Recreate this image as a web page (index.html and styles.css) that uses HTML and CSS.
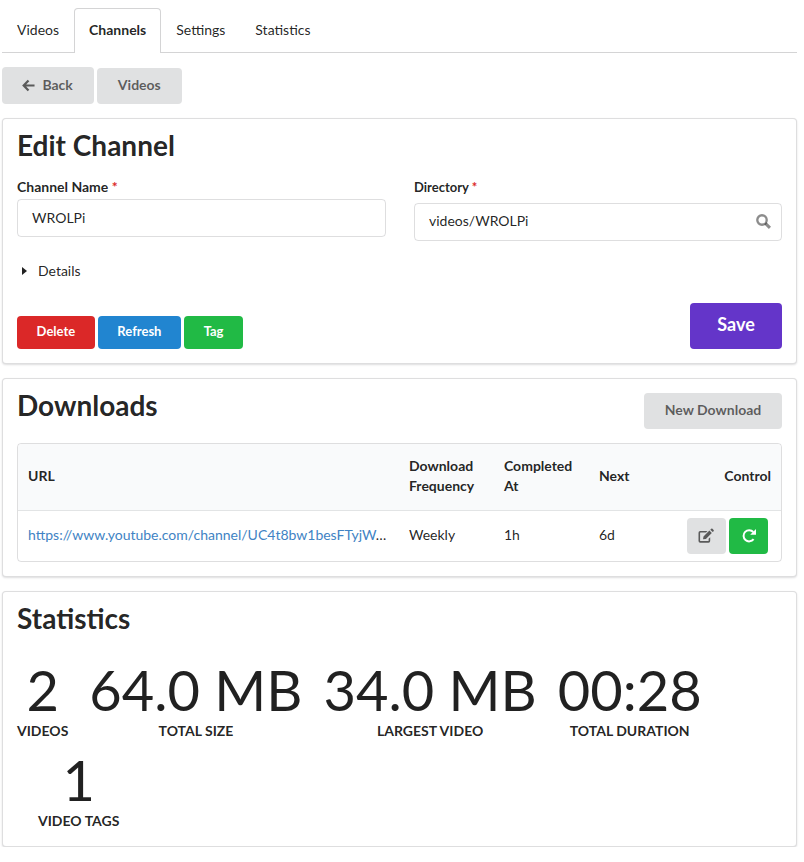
FILE: index.html
```html
<!DOCTYPE html>
<html lang="en">
<head>
    <meta charset="UTF-8">
    <meta name="viewport" content="width=device-width, initial-scale=1.0">
    <title>Edit Channel</title>
    <link rel="stylesheet" href="styles.css">
</head>
<body>
    <div class="tabs">
        <a class="tab">Videos</a>
        <a class="tab active">Channels</a>
        <a class="tab">Settings</a>
        <a class="tab">Statistics</a>
    </div>

    <div class="nav-buttons">
        <button class="btn grey back">
            <svg class="icon-back" viewBox="0 0 14 14"><path d="M7 1.500 1.800 7 7 12.500M2 7h11.500" fill="none" stroke="currentColor" stroke-width="2.400"/></svg>
            Back
        </button>
        <button class="btn grey">Videos</button>
    </div>

    <div class="card edit-card">
        <h1>Edit Channel</h1>
        <div class="fields">
            <div class="field name-field">
                <label>Channel Name <span class="req">*</span></label>
                <div class="input">WROLPi</div>
            </div>
            <div class="field dir-field">
                <label>Directory <span class="req">*</span></label>
                <div class="input">
                    videos/WROLPi
                    <svg class="icon-search" viewBox="0 0 14 14"><circle cx="5.600" cy="5.600" r="4.400" fill="none" stroke="currentColor" stroke-width="2.200"/><path d="M8.800 8.800l4.200 4.200" stroke="currentColor" stroke-width="2.800"/></svg>
                </div>
            </div>
        </div>
        <div class="details"><span class="caret"></span>Details</div>
        <div class="actions">
            <button class="btn red">Delete</button>
            <button class="btn blue">Refresh</button>
            <button class="btn green">Tag</button>
            <button class="btn save">Save</button>
        </div>
    </div>

    <div class="card downloads-card">
        <div class="card-head">
            <h2>Downloads</h2>
            <button class="btn grey new-download">New Download</button>
        </div>
        <div class="table">
            <div class="row head">
                <div class="cell">URL</div>
                <div class="cell">Download Frequency</div>
                <div class="cell">Completed At</div>
                <div class="cell">Next</div>
                <div class="cell right">Control</div>
            </div>
            <div class="row">
                <div class="cell"><a class="url">https://www.youtube.com/channel/UC4t8bw1besFTyjW</a>…</div>
                <div class="cell">Weekly</div>
                <div class="cell">1h</div>
                <div class="cell">6d</div>
                <div class="cell controls">
                    <button class="btn grey icon-btn edit">
                        <svg viewBox="0 0 16 16"><path d="M12.200 9.200V13a1.700 1.700 0 0 1-1.700 1.700H2.200A1.700 1.700 0 0 1 .5 13V4.700A1.700 1.700 0 0 1 2.200 3H9.500L8 4.600H2.400a.3.300 0 0 0-.3.3v7.900a.3.300 0 0 0 .3.300h7.900a.3.300 0 0 0 .3-.3V10.800z" fill="currentColor"/><path d="M5.500 8.500 11.400 2.600l2.400 2.400-5.900 5.900-2.900.4zM12.300 1.700l.9-.9a1 1 0 0 1 1.300 0l1.100 1.100a1 1 0 0 1 0 1.300l-.9.9z" fill="currentColor"/></svg>
                    </button>
                    <button class="btn green icon-btn">
                        <svg viewBox="0 0 16 16"><path d="M12.600 11.200A5.600 5.600 0 1 1 12.300 4" fill="none" stroke="currentColor" stroke-width="2"/><path d="M15 1v5.800H9.200z" fill="currentColor"/></svg>
                    </button>
                </div>
            </div>
        </div>
    </div>

    <div class="card stats-card">
        <h2>Statistics</h2>
        <div class="stats">
            <div class="stat"><div class="value">2</div><div class="label">Videos</div></div>
            <div class="stat"><div class="value">64.0 MB</div><div class="label">Total Size</div></div>
            <div class="stat"><div class="value">34.0 MB</div><div class="label">Largest Video</div></div>
            <div class="stat"><div class="value">00:28</div><div class="label">Total Duration</div></div>
            <div class="stat"><div class="value">1</div><div class="label">Video Tags</div></div>
        </div>
    </div>
</body>
</html>
```

FILE: styles.css
```css
body {
    margin: 0;
    padding: 8px 7px 0 2px;
    font-family: Lato, "Open Sans", sans-serif;
    font-size: 14px;
    line-height: 20px;
    color: rgba(0, 0, 0, 0.87);
    background-color: #fff;
}
h1, h2 {
    margin: 0;
    font-size: 28px;
    line-height: 32px;
    font-weight: 700;
}
button {
    font-family: inherit;
}

.tabs {
    display: flex;
    height: 44px;
    border-bottom: 1px solid #d4d4d5;
    box-sizing: content-box;
}
.tab {
    padding: 12px 15px;
}
.tab.active {
    margin-bottom: -1px;
    padding: 11px 14px 12px;
    font-weight: 700;
    background-color: #fff;
    border: 1px solid #d4d4d5;
    border-bottom: 0;
    border-radius: 4px 4px 0 0;
}

.btn {
    display: inline-block;
    margin: 0;
    border: 0;
    border-radius: 4px;
    font-size: 14px;
    font-weight: 700;
    line-height: 14px;
    color: #fff;
}
.btn.grey {
    color: rgba(0, 0, 0, 0.6);
    background-color: #e0e1e2;
}
.btn.red { background-color: #db2828; }
.btn.blue { background-color: #2185d0; }
.btn.green { background-color: #21ba45; }

.nav-buttons {
    display: flex;
    align-items: flex-end;
    gap: 3px;
    margin-top: 14px;
}
.nav-buttons .btn {
    height: 36px;
    padding: 0 21px 2px;
}
.nav-buttons .back {
    height: 37px;
    padding: 0 21px 1px 20px;
}
.icon-back {
    width: 13px;
    height: 13px;
    margin-right: 4px;
    vertical-align: -2px;
}

.card {
    margin-top: 14px;
    padding: 14px;
    background-color: #fff;
    border: 1px solid rgba(34, 36, 38, 0.15);
    border-radius: 4px;
    box-shadow: 0 1px 2px rgba(34, 36, 38, 0.15);
}

.edit-card {
    height: 246px;
    box-sizing: border-box;
    padding-top: 10px;
}
.fields {
    display: grid;
    grid-template-columns: 369px 368px;
    gap: 28px;
    margin-top: 16px;
}
.field label {
    display: block;
    font-weight: 700;
}
.name-field label {
    margin-bottom: 2px;
}
.dir-field label {
    margin-bottom: 6px;
    font-size: 13px;
}
.req {
    color: #db2828;
}
.input {
    display: flex;
    align-items: center;
    justify-content: space-between;
    height: 38px;
    box-sizing: border-box;
    padding: 0 14px;
    border: 1px solid rgba(34, 36, 38, 0.15);
    border-radius: 4px;
}
.dir-field .input {
    padding-bottom: 2px;
}
.icon-search {
    width: 15px;
    height: 15px;
    margin-right: -4px;
    color: rgba(0, 0, 0, 0.45);
}
.details {
    display: flex;
    align-items: center;
    margin-top: 20px;
}
.caret {
    width: 0;
    height: 0;
    margin: 0 11px 0 5px;
    border-left: 5px solid rgba(0, 0, 0, 0.87);
    border-top: 4px solid transparent;
    border-bottom: 4px solid transparent;
}
.actions {
    display: flex;
    align-items: flex-end;
    gap: 3px;
    margin-top: 22px;
}
.actions .btn {
    height: 33px;
    padding: 0 19.6px 4px;
    font-size: 13px;
}
.actions .save {
    height: 46px;
    width: 92px;
    margin-left: auto;
    padding: 0 0 4px;
    font-size: 18px;
    background-color: #6435c9;
}

.downloads-card {
    height: 199px;
    box-sizing: border-box;
    padding-top: 10px;
}
.card-head {
    display: flex;
    justify-content: space-between;
    align-items: flex-start;
    height: 54px;
}
.new-download {
    height: 36px;
    width: 138px;
    margin-top: 4px;
    padding-bottom: 4px;
}
.table {
    border: 1px solid rgba(34, 36, 38, 0.15);
    border-radius: 4px;
}
.row {
    display: grid;
    grid-template-columns: 381px 95px 95px 62px 1fr;
    align-items: center;
    height: 50px;
}
.row.head {
    height: 66px;
    font-weight: 700;
    background-color: #f9fafb;
    border-bottom: 1px solid rgba(34, 36, 38, 0.1);
    border-radius: 4px 4px 0 0;
}
.cell {
    padding: 0 10px 2px;
    min-width: 0;
}
.cell.right {
    text-align: right;
}
.url {
    color: #4183c4;
}
.controls {
    display: flex;
    justify-content: flex-end;
    gap: 3px;
    padding: 0 13px 0 0;
}
.icon-btn {
    display: flex;
    align-items: center;
    justify-content: center;
    width: 39px;
    height: 36px;
    padding: 0;
}
.icon-btn svg {
    width: 16px;
    height: 16px;
}
.icon-btn.edit svg {
    margin-right: 2px;
}

.stats-card {
    height: 256px;
    box-sizing: border-box;
    padding-top: 10px;
}
.stats {
    display: flex;
    flex-wrap: wrap;
    margin-top: 28px;
}
.stat {
    margin: 0 0 11px 21px;
    text-align: center;
}
.stat:first-child {
    margin-left: 0;
}
.value {
    font-size: 56px;
    line-height: 56px;
}
.label {
    margin-top: 3px;
    font-weight: 700;
    line-height: 20px;
    text-transform: uppercase;
}
```
